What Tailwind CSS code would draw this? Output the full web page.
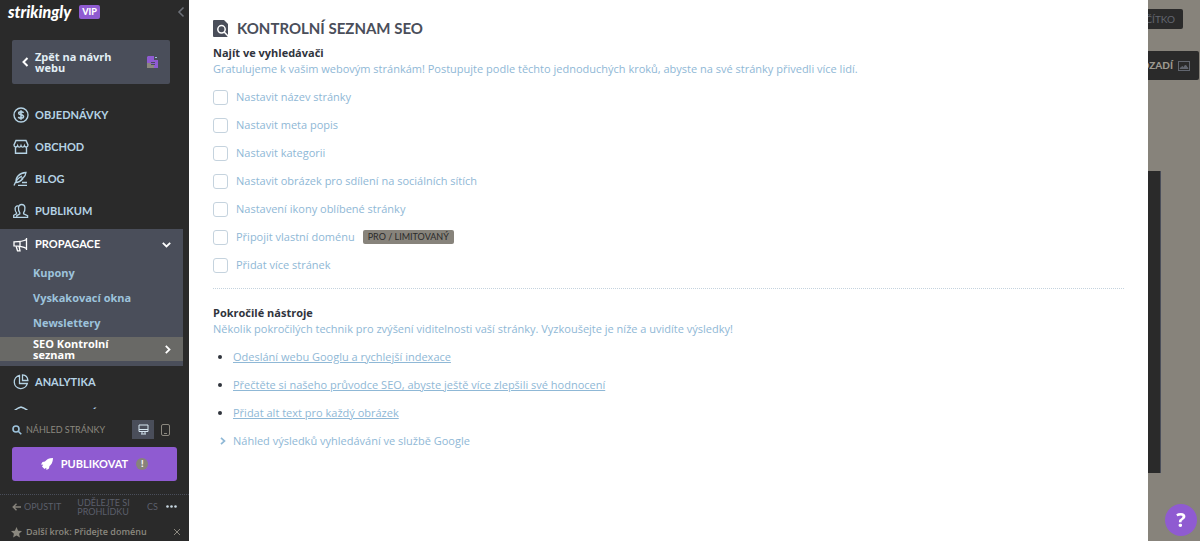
<!DOCTYPE html>
<html lang="cs">
<head>
    <meta charset="UTF-8">
    <meta name="viewport" content="width=device-width, initial-scale=1.0">
    <title>Kontrolní seznam SEO</title>
    <script src="https://cdn.jsdelivr.net/npm/@tailwindcss/browser@4"></script>
</head>
<body class="flex h-screen overflow-hidden bg-[#87837b] font-['Open_Sans',sans-serif] text-[11px] text-[#8fb8d6]">

    <!-- Sidebar -->
    <aside class="flex w-[189px] shrink-0 flex-col bg-[#2a2a2a] font-['Lato',sans-serif]">
        <header class="flex h-[24px] shrink-0 items-center gap-2 pl-2 pr-1">
            <a href="#" class="text-[16px] leading-[20px] font-black italic text-white">strikingly</a>
            <span class="rounded-[2px] bg-[#8f5bd1] px-[3px] text-[9px] leading-[14px] font-black text-white">VIP</span>
            <button aria-label="Skrýt panel" class="ml-auto text-[#6c7078]">
                <svg class="h-[12px] w-[8px]" viewBox="0 0 8 12" fill="none" stroke="currentColor" stroke-width="1.6"><path d="M6.500 1.500 2 6l4.500 4.500"/></svg>
            </button>
        </header>

        <a href="#" class="mx-3 mt-4 mr-[19px] flex h-[44px] shrink-0 items-center gap-[6px] rounded-[2px] bg-[#4a4e5a] pr-3 pl-[10px] font-['Open_Sans',sans-serif] leading-[11px] font-bold text-[#e3eef5]">
            <svg class="h-[10px] w-[7px] shrink-0" viewBox="0 0 7 10" fill="none" stroke="#fff" stroke-width="2"><path d="M5.500 1 1.500 5l4 4"/></svg>
            <span class="flex-1">Zpět na návrh<br>webu</span>
            <svg class="h-[13px] w-[11px] shrink-0" viewBox="0 0 11 13"><path fill="#8f5bd1" d="M1 0h6v4h4v8H0V1z"/><path fill="#8d897f" d="M0 7h4v2h3v3H0z"/><path fill="#9dc3dc" d="M8 1h2v1H8z"/><path stroke="#4a4e5a" d="M4 6.500h4M4 8.500h4"/></svg>
        </a>

        <nav class="mt-[15px] mb-[2px] min-h-0 flex-1 overflow-hidden font-bold text-[#b5d3e5]">
            <a href="#" class="flex h-8 items-center gap-[6px] pl-[13px]">
                <svg class="h-4 w-4" viewBox="0 0 16 16" fill="none" stroke="currentColor" stroke-width="1.4"><circle cx="8" cy="8" r="7"/><path stroke-width="1.600" d="M10.500 5.800C10 4.900 9 4.800 8 4.800c-1.300 0-2.300.5-2.300 1.500C5.700 8.600 10.500 7 10.500 9.600c0 1.100-1.100 1.700-2.500 1.700-1.300 0-2.200-.4-2.700-1.300M8 3.300v9.400"/></svg>
                OBJEDNÁVKY
            </a>
            <a href="#" class="flex h-8 items-center gap-[6px] pl-[13px]">
                <svg class="h-4 w-4" viewBox="0 0 16 16" fill="none" stroke="currentColor" stroke-width="1.4"><path d="M3 1.500h10l2 4.500c0 2.400-3 2.600-3.600.8C10.800 8.600 8.600 8.600 8 6.800 7.400 8.600 5.200 8.600 4.600 6.800 4 8.600 1 8.400 1 6zM2.500 8.500v5.700h11V8.500"/></svg>
                OBCHOD
            </a>
            <a href="#" class="flex h-8 items-center gap-[6px] pl-[13px]">
                <svg class="h-4 w-4" viewBox="0 0 16 16" fill="none" stroke="currentColor" stroke-width="1.3"><path d="M1 14.500C3 9 5.500 6.500 9 5M3 11.500C2.500 6.500 6 2 13 1.500c-.3 2.200-1 3.700-2.500 5L8.800 7l1 .8C8 9.800 5.500 11.500 3 11.500zM5 14.300h9M9 11.500h5"/></svg>
                BLOG
            </a>
            <a href="#" class="flex h-8 items-center gap-[6px] pl-[13px]">
                <svg class="h-4 w-4" viewBox="0 0 16 16" fill="none" stroke="currentColor" stroke-width="1.3"><path d="M6.800 9.800C5.500 8.500 5.300 7 5.500 4.500 5.700 2.500 7 1.500 8.700 1.500s3 1 3.200 3c.2 2.500 0 4-1.300 5.300v1.100l4 1.800v1.600H3.800v-1.600l3-1.800z"/><path d="M5.200 3C3.300 2.700 2 4 2.100 5.800c0 2 .4 3.200 1.400 4v1L.7 12.300v2H4"/></svg>
                PUBLIKUM
            </a>

            <div class="mt-[2px] mr-[6px] bg-[#4a4e5a] pb-[5px]">
                <a href="#" class="flex h-[31px] items-center gap-[6px] pr-3 pl-[13px] text-white">
                    <svg class="h-4 w-4" viewBox="0 0 16 16" fill="none" stroke="currentColor" stroke-width="1.3"><path d="M13.500 1v12M13.500 2.500C10.500 4.200 7.500 4.800 1 4.800v4c6.500 0 9.500.8 12.500 2.700M3 8.800l1.500 5H7L6 9.200M7 4.800v4.200"/></svg>
                    PROPAGACE
                    <svg class="ml-auto h-[6px] w-[9px]" viewBox="0 0 9 6" fill="none" stroke="currentColor" stroke-width="1.8"><path d="M.8.8 4.500 4.500 8.200.8"/></svg>
                </a>
                <div class="font-['Open_Sans',sans-serif] leading-[25px] text-[#9dc3dc]">
                    <a href="#" class="block pl-[33px]">Kupony</a>
                    <a href="#" class="block pl-[33px]">Vyskakovací okna</a>
                    <a href="#" class="block pl-[33px]">Newslettery</a>
                    <a href="#" aria-current="page" class="mt-[2px] flex h-6 items-center bg-[#696966] pr-3 pl-[33px] leading-[11px] text-white">
                        <span class="flex-1">SEO Kontrolní<br>seznam</span>
                        <svg class="h-[9px] w-[6px]" viewBox="0 0 6 9" fill="none" stroke="currentColor" stroke-width="1.8"><path d="M.8.8 4.500 4.500.8 8.200"/></svg>
                    </a>
                </div>
            </div>

            <a href="#" class="flex h-8 items-center gap-[6px] pl-[13px]">
                <svg class="h-4 w-4" viewBox="0 0 16 16" fill="none" stroke="currentColor" stroke-width="1.3"><path d="M6.500 1.500a6.600 6.600 0 1 0 7.800 8H6.500zM9.500.9v5.600h5.400A6 6 0 0 0 9.500.9z"/></svg>
                ANALYTIKA
            </a>
            <a href="#" class="flex h-8 items-center gap-[6px] pl-[13px]">
                <svg class="h-4 w-4" viewBox="0 0 16 16" fill="none" stroke="currentColor" stroke-width="1.4"><path d="M2 4l3.500-2L8 1l2.500 1L14 4v8l-6 3-6-3z"/></svg>
                NASTAVENÍ
            </a>
        </nav>

        <div class="flex h-[35px] shrink-0 items-center pl-3 text-[9px] text-[#8b887f]">
            <svg class="mr-1 h-[10px] w-[10px] text-[#9dc3dc]" viewBox="0 0 10 10" fill="none" stroke="currentColor" stroke-width="1.6"><circle cx="4" cy="4" r="3"/><path d="M6.200 6.200 9.300 9.300"/></svg>
            <span>NÁHLED STRÁNKY</span>
            <button aria-label="Počítač" class="ml-auto flex h-[19px] w-[22px] items-center justify-center bg-[#4a4e5a] text-[#d6e6f0]">
                <svg class="h-[11px] w-[11px]" viewBox="0 0 11 11" fill="none" stroke="currentColor"><path d="M1 1h9v6.500H1zM1 5.500h9M4 7.500v2.200M7 7.500v2.200M3 10h5"/></svg>
            </button>
            <button aria-label="Mobil" class="mr-[19px] ml-[7px]">
                <svg class="h-[12px] w-[9px]" viewBox="0 0 9 12" fill="none" stroke="currentColor"><rect x=".500" y=".500" width="8" height="11" rx="1.500"/><path d="M3 9.500h3"/></svg>
            </button>
        </div>

        <button class="mx-3 flex h-[34px] shrink-0 items-center justify-center gap-2 rounded-[3px] bg-[#8f5bd1] font-bold text-white">
            <svg class="h-3 w-3" viewBox="0 0 12 12" fill="currentColor"><path d="M12 0C7.500.2 5.500 1.500 4 3.500L1.500 4 0 6.500l2.200.3L1 8.500 3.500 11l1.700-1.200L5.500 12 8 10.500 8.500 8C10.500 6.500 11.800 4.500 12 0z"/></svg>
            PUBLIKOVAT
            <span class="flex h-3 w-3 items-center justify-center rounded-full bg-[#87837b] text-[9px] font-black">!</span>
        </button>

        <div class="mt-[13px] flex h-[24px] shrink-0 items-center border-t border-dotted border-[#4a4e5a] px-3 text-[9px] leading-[9px] text-[#5b5f6a]">
            <a href="#" class="flex items-center gap-[3px]">
                <svg class="h-[8px] w-[9px] text-[#87837b]" viewBox="0 0 9 8" fill="none" stroke="currentColor" stroke-width="1.4"><path d="M4.500.8 1.200 4l3.300 3.200M1.200 4H9"/></svg>
                OPUSTIT
            </a>
            <a href="#" class="ml-4">UDĚLEJTE SI<br>PROHLÍDKU</a>
            <a href="#" class="ml-auto">CS</a>
            <button aria-label="Další" class="ml-2 text-[#c9d8e2]">
                <svg class="h-[3px] w-[11px]" viewBox="0 0 11 3" fill="currentColor"><circle cx="1.500" cy="1.500" r="1.300"/><circle cx="5.500" cy="1.500" r="1.300"/><circle cx="9.500" cy="1.500" r="1.300"/></svg>
            </button>
        </div>

        <footer class="mt-[5px] flex h-[18px] shrink-0 items-center gap-1 pr-2 pl-[11px] font-['Open_Sans',sans-serif] text-[9px] font-semibold text-[#8b887f]">
            <svg class="h-[11px] w-[11px]" viewBox="0 0 11 11" fill="currentColor"><path d="M5.500 0 7.100 3.700l3.900.4-2.900 2.600.8 3.900-3.400-2-3.400 2 .8-3.900L0 4.100l3.900-.4z"/></svg>
            <span>Další krok: Přidejte doménu</span>
            <button aria-label="Zavřít" class="ml-auto">
                <svg class="h-[8px] w-[8px]" viewBox="0 0 8 8" fill="none" stroke="currentColor"><path d="m1 1 6 6M7 1 1 7"/></svg>
            </button>
        </footer>
    </aside>

    <!-- SEO checklist -->
    <main class="min-w-0 flex-1 overflow-hidden bg-white px-6 pt-[17px]">
        <h1 class="flex h-[22px] items-center gap-2 font-['Lato',sans-serif] text-[15px] leading-[22px] font-bold text-[#4a4e5a]">
            <svg class="h-[17px] w-[16px]" viewBox="0 0 16 17"><path fill="#4a4e5a" d="M1 0h10l4 4v12a1 1 0 0 1-1 1H1a1 1 0 0 1-1-1V1a1 1 0 0 1 1-1z"/><g fill="none" stroke="#fff" stroke-width="1.5"><circle cx="8.500" cy="9.300" r="3.700"/><path d="m11.200 12 4.300 4.500"/></g></svg>
            KONTROLNÍ SEZNAM SEO
        </h1>

        <section>
            <h2 class="mt-[6px] leading-4 font-bold text-[#30343d]">Najít ve vyhledávači</h2>
            <p class="leading-4">Gratulujeme k vašim webovým stránkám! Postupujte podle těchto jednoduchých kroků, abyste na své stránky přivedli více lidí.</p>
            <ul class="mt-[6px]">
                <li class="flex h-7 items-center gap-2">
                    <input type="checkbox" id="title" class="h-[15px] w-[15px] appearance-none rounded-[3px] border border-[#c5d3de] bg-white">
                    <label for="title">Nastavit název stránky</label>
                </li>
                <li class="flex h-7 items-center gap-2">
                    <input type="checkbox" id="meta" class="h-[15px] w-[15px] appearance-none rounded-[3px] border border-[#c5d3de] bg-white">
                    <label for="meta">Nastavit meta popis</label>
                </li>
                <li class="flex h-7 items-center gap-2">
                    <input type="checkbox" id="category" class="h-[15px] w-[15px] appearance-none rounded-[3px] border border-[#c5d3de] bg-white">
                    <label for="category">Nastavit kategorii</label>
                </li>
                <li class="flex h-7 items-center gap-2">
                    <input type="checkbox" id="share" class="h-[15px] w-[15px] appearance-none rounded-[3px] border border-[#c5d3de] bg-white">
                    <label for="share">Nastavit obrázek pro sdílení na sociálních sítích</label>
                </li>
                <li class="flex h-7 items-center gap-2">
                    <input type="checkbox" id="favicon" class="h-[15px] w-[15px] appearance-none rounded-[3px] border border-[#c5d3de] bg-white">
                    <label for="favicon">Nastavení ikony oblíbené stránky</label>
                </li>
                <li class="flex h-7 items-center gap-2">
                    <input type="checkbox" id="domain" class="h-[15px] w-[15px] appearance-none rounded-[3px] border border-[#c5d3de] bg-white">
                    <label for="domain">Připojit vlastní doménu</label>
                    <span class="rounded-[2px] bg-[#87837b] px-[5px] font-['Lato',sans-serif] text-[9px] leading-[14px] text-[#2a2a2a]">PRO / LIMITOVANÝ</span>
                </li>
                <li class="flex h-7 items-center gap-2">
                    <input type="checkbox" id="pages" class="h-[15px] w-[15px] appearance-none rounded-[3px] border border-[#c5d3de] bg-white">
                    <label for="pages">Přidat více stránek</label>
                </li>
            </ul>
        </section>

        <hr class="mt-[9px] border-t border-dotted border-[#c5d3de]">

        <section>
            <h2 class="mt-4 leading-4 font-bold text-[#30343d]">Pokročilé nástroje</h2>
            <p class="leading-4">Několik pokročilých technik pro zvýšení viditelnosti vaší stránky. Vyzkoušejte je níže a uvidíte výsledky!</p>
            <ul class="mt-[6px] list-disc pl-5 leading-7 marker:text-[#30343d]">
                <li><a href="#" class="underline">Odeslání webu Googlu a rychlejší indexace</a></li>
                <li><a href="#" class="underline">Přečtěte si našeho průvodce SEO, abyste ještě více zlepšili své hodnocení</a></li>
                <li><a href="#" class="underline">Přidat alt text pro každý obrázek</a></li>
            </ul>
            <button class="flex h-7 items-center gap-[7px] pl-[7px]">
                <svg class="h-[8px] w-[6px]" viewBox="0 0 6 8" fill="none" stroke="currentColor" stroke-width="1.7"><path d="M1 .8 4.500 4 1 7.200"/></svg>
                Náhled výsledků vyhledávání ve službě Google
            </button>
        </section>
    </main>

    <!-- Page editor behind the panel -->
    <div class="flex w-[52px] shrink-0 flex-col items-end overflow-hidden font-['Lato',sans-serif] text-[10px]">
        <button class="mt-[9px] mr-[17px] h-[20px] shrink-0 rounded-[2px] bg-[#2a2a2a] px-2 text-[#62666f]">TLAČÍTKO</button>
        <button class="mt-[22px] mr-px flex h-[29px] shrink-0 items-center gap-[5px] rounded-[2px] bg-[#2a2a2a] px-[9px] font-black text-[#9d998f]">
            POZADÍ
            <svg class="h-[10px] w-[12px] text-[#62666f]" viewBox="0 0 12 10" fill="none" stroke="currentColor"><rect x=".500" y=".500" width="11" height="9"/><path fill="currentColor" d="m2 7.500 2-2 1.500 1L7.500 4 10 7.500z"/></svg>
        </button>
        <div class="mt-[91px] h-[302px] w-full shrink-0 pr-[39px]">
            <div class="h-full w-[13px] border-r border-[#4a4e5a] bg-[#2a2a2a]"></div>
        </div>
    </div>

    <button aria-label="Nápověda" class="fixed right-[3px] bottom-[5px] flex h-8 w-8 items-center justify-center rounded-full bg-[#8f5bd1] text-[20px] font-bold text-white">?</button>
</body>
</html>
